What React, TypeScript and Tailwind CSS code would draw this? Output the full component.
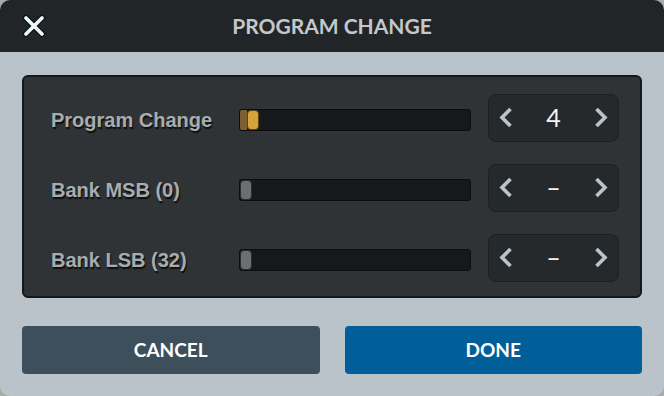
import React from 'react';

interface Row {
  label: string;
  value: string;
  active: boolean;
}

const rows: Row[] = [
  { label: 'Program Change', value: '4', active: true },
  { label: 'Bank MSB (0)', value: '–', active: false },
  { label: 'Bank LSB (32)', value: '–', active: false },
];

const Chevron = ({ dir }: { dir: 'left' | 'right' }) => (
  <svg width="14" height="21" viewBox="0 0 14 21" className="shrink-0">
    <path
      d={dir === 'left' ? 'M11.5 2 L3 10.5 L11.5 19' : 'M2.5 2 L11 10.5 L2.5 19'}
      fill="none"
      stroke="#b9c5cd"
      strokeWidth="3.6"
      strokeLinejoin="miter"
    />
  </svg>
);

const Slider = ({ active }: { active: boolean }) => (
  <div className="flex h-[22px] w-[232px] items-center rounded-[3px] border border-[#0c0d0e] bg-[#161819]">
    {active ? (
      <>
        <div className="h-full w-[7px] rounded-l-[2px] bg-[#7b6132]" />
        <div className="h-[20px] w-[12px] rounded-[4px] border border-[#5c4613] bg-[#d6a43b]" />
      </>
    ) : (
      <div className="h-[20px] w-[12px] rounded-[4px] border border-[#2a2c2d] bg-[#6c6f71]" />
    )}
  </div>
);

const Stepper = ({ value }: { value: string }) => (
  <div className="flex h-[48px] w-[131px] items-center justify-between rounded-[8px] border border-[#1d2022] bg-[#25292b] pl-[10px] pr-[10px]">
    <Chevron dir="left" />
    <span className="text-[25px] leading-none text-[#f2f4f5] [font-family:Lato,sans-serif]">{value}</span>
    <Chevron dir="right" />
  </div>
);

export default function App() {
  return (
    <div className="h-[396px] w-[664px] bg-[#a7acab]">
      <div className="flex h-full w-full flex-col overflow-hidden rounded-[10px] bg-[#b9c3c9]">
        {/* header */}
        <div className="relative flex h-[52px] shrink-0 items-center justify-center bg-[#212527]">
          <svg
            width="24"
            height="24"
            viewBox="0 0 24 24"
            className="absolute left-[22px] top-[14px]"
          >
            <path d="M4 4 L20 20 M20 4 L4 20" stroke="#0b0d0e" strokeWidth="6" strokeLinecap="round" />
            <path d="M4 4 L20 20 M20 4 L4 20" stroke="#eaf6fc" strokeWidth="3.8" strokeLinecap="round" />
          </svg>
          <span className="text-[21px] font-bold text-[#c4c8ca] [font-family:Lato,sans-serif]">
            PROGRAM CHANGE
          </span>
        </div>

        {/* body */}
        <div className="flex flex-1 flex-col px-[22px] pt-[23px]">
          <div className="flex h-[223px] flex-col justify-center gap-[22px] rounded-[6px] border-2 border-[#161819] bg-[#2f3335] pl-[27px] pr-[21px] pt-[2px]">
            {rows.map(r => (
              <div key={r.label} className="flex items-center">
                <div className="flex items-center pt-[5px]">
                  <span className="w-[188px] text-[20px] font-bold text-[#a9acae] [font-family:'Liberation_Sans',Arial,sans-serif] [text-shadow:1px_2px_1px_#0e0f10]">
                    {r.label}
                  </span>
                  <Slider active={r.active} />
                </div>
                <div className="ml-auto">
                  <Stepper value={r.value} />
                </div>
              </div>
            ))}
          </div>

          <div className="mt-[28px] flex gap-[25px]">
            <button className="flex h-[48px] flex-1 items-center justify-center rounded-[4px] bg-[#3e4f5c] text-[19px] font-bold text-white [font-family:Lato,sans-serif]">
              CANCEL
            </button>
            <button className="flex h-[48px] flex-1 items-center justify-center rounded-[4px] bg-[#005f99] text-[19px] font-bold text-white [font-family:Lato,sans-serif]">
              DONE
            </button>
          </div>
        </div>
      </div>
    </div>
  );
}
